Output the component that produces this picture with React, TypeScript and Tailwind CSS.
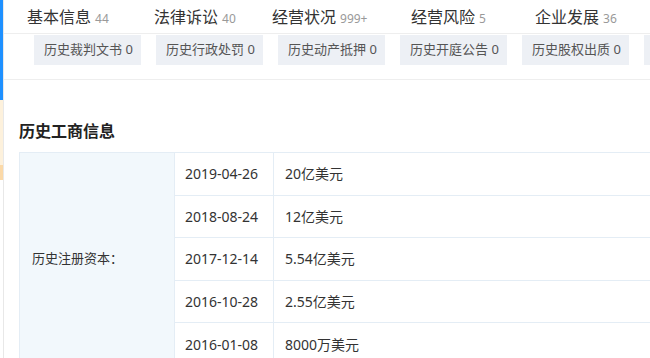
import React from "react";

const tabs = [
  { name: "基本信息", count: "44", w: "w-[127px]" },
  { name: "法律诉讼", count: "40", w: "w-[118px]" },
  { name: "经营状况", count: "999+", w: "w-[139px]" },
  { name: "经营风险", count: "5", w: "w-[124px]" },
  { name: "企业发展", count: "36", w: "w-[124px]" },
];

const chips = [
  "历史裁判文书 0",
  "历史行政处罚 0",
  "历史动产抵押 0",
  "历史开庭公告 0",
  "历史股权出质 0",
  "历史经营异常 0",
];

const rows = [
  { date: "2019-04-26", value: "20亿美元" },
  { date: "2018-08-24", value: "12亿美元" },
  { date: "2017-12-14", value: "5.54亿美元" },
  { date: "2016-10-28", value: "2.55亿美元" },
  { date: "2016-01-08", value: "8000万美元" },
];

const App: React.FC = () => {
  return (
    <div
      className="w-[650px] h-[358px] overflow-hidden bg-white flex text-[#333]"
      style={{ fontFamily: '"Noto Sans", "Noto Sans CJK SC", sans-serif' }}
    >
      {/* left edge strip */}
      <div className="w-[4px] shrink-0 flex flex-col border-r border-[#e8e8e8]">
        <div className="h-[100px] w-[3px] shrink-0 bg-[#1e90ff]" />
        <div className="h-[65px] shrink-0 bg-[#fdf1dc]" />
        <div className="h-[15px] shrink-0 bg-[#fbd9a8]" />
      </div>

      <div className="flex-1 min-w-0 flex flex-col">
        {/* Tabs */}
        <div className="h-[34px] shrink-0 flex items-center pl-[23px] border-b border-[#eeeeee] whitespace-nowrap">
          {tabs.map((t) => (
            <div key={t.name} className={`${t.w} shrink-0 flex items-baseline`}>
              <span className="text-[16px] text-[#333]">{t.name}</span>
              <span className="text-[12px] text-[#999] ml-[4px]">{t.count}</span>
            </div>
          ))}
        </div>

        {/* Sub chips */}
        <div className="h-[46px] shrink-0 pt-[1px] flex items-start pl-[30px] gap-[15px] border-b border-[#eeeeee] whitespace-nowrap overflow-hidden">
          {chips.map((c) => (
            <div
              key={c}
              className="h-[30px] w-[107px] shrink-0 bg-[#edf0f5] text-[13px] text-[#555] flex items-center pl-[10px]"
            >
              {c}
            </div>
          ))}
        </div>

        {/* Heading */}
        <div className="pl-[15px] pt-[41px] h-[72px] shrink-0">
          <h3 className="text-[16px] font-bold text-[#222] leading-[20px]">历史工商信息</h3>
        </div>

        {/* Table */}
        <div className="ml-[15px] shrink-0 grid grid-cols-[155px_99px_1fr] border-t border-l border-[#e4edf5]">
          <div className="row-span-5 bg-[#f2f8fc] border-r border-b border-[#e4edf5] flex items-center pl-[12px] text-[13px] text-[#333]">
            历史注册资本：
          </div>
          {rows.map((r) => (
            <React.Fragment key={r.date}>
              <div className="h-[42.6px] border-r border-b border-[#e4edf5] flex items-center pl-[10px] text-[14px]">
                {r.date}
              </div>
              <div className="h-[42.6px] border-b border-[#e4edf5] flex items-center pl-[11px] text-[14px]">
                {r.value}
              </div>
            </React.Fragment>
          ))}
        </div>
      </div>
    </div>
  );
};

export default App;
